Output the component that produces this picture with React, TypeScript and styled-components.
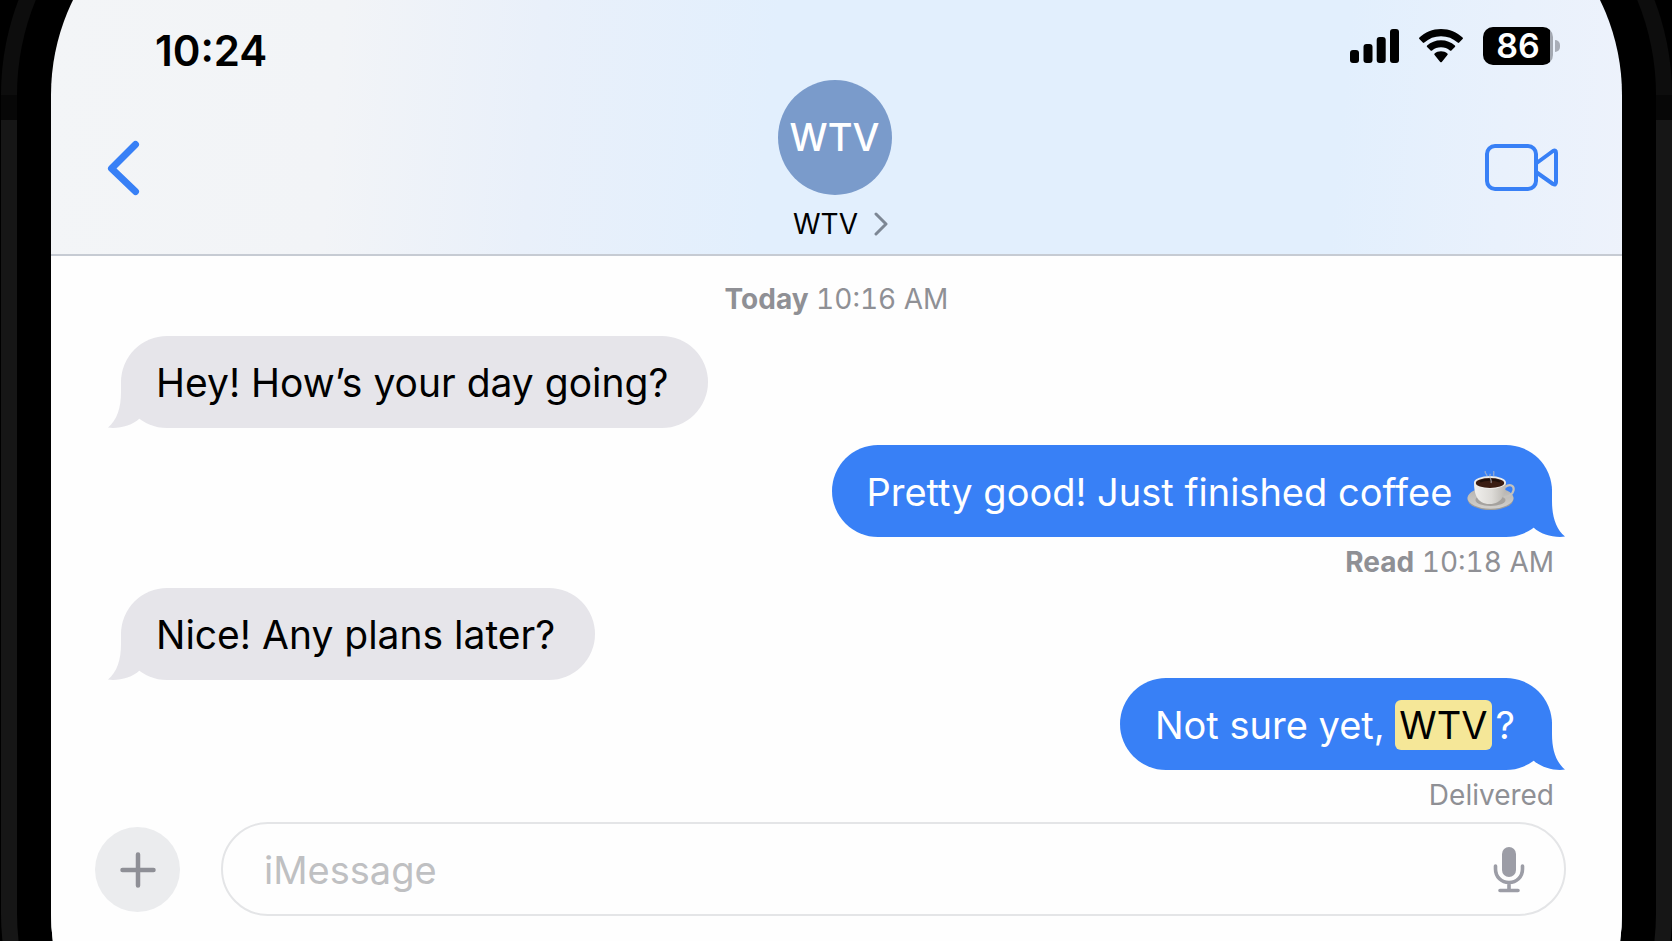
import React from "react";
import styled, { createGlobalStyle } from "styled-components";

const blue = "#3880f6";
const grey = "#e6e5ea";
const muted = "#8f9095";

const GlobalStyle = createGlobalStyle`
  * { box-sizing: border-box; }
  body {
    margin: 0;
    background: #000;
    font-family: Inter, "Liberation Sans", sans-serif;
    color: #000;
  }
  button, input { font: inherit; color: inherit; }
  p { margin: 0; }
`;

/* The phone runs past the top and bottom of the window, so only the start of its corners shows. */
const Stage = styled.div`
  min-height: 100vh;
  overflow: hidden;
  display: flex;
  flex-direction: column;
  background: #000;
`;

const Rim = styled.div`
  flex: 1;
  display: flex;
  margin: -171px 0 -238px 1px;
  padding: 16px;
  border-radius: 266px;
  background: linear-gradient(#0d0d0d 266px, #070707 266px, #070707 291px, #161616 291px);
`;

const Bezel = styled.div`
  flex: 1;
  display: flex;
  min-width: 0;
  padding: 34px;
  border-radius: 250px;
  background: #000;
`;

const Screen = styled.main`
  flex: 1;
  min-width: 0;
  display: flex;
  flex-direction: column;
  padding: 121px 0 188px;
  border-radius: 216px;
  overflow: hidden;
  background: linear-gradient(95deg, #f3f5f7 0%, #f2f4f7 18%, #e9f0fa 30%, #e2effd 44%, #e2effd 78%, #e9f1fc 88%, #f0f3fb 100%);
`;

const Header = styled.header`
  border-bottom: 2px solid #c6cbd3;
`;

const StatusBar = styled.div`
  display: flex;
  justify-content: space-between;
  height: 80px;
  padding: 27px 62px 0 104px;
`;

const Clock = styled.time`
  font-size: 42px;
  line-height: 48px;
  font-weight: 600;
`;

const StatusIcons = styled.div`
  display: flex;
  align-items: flex-start;
  gap: 20px;
`;

const BatteryBox = styled.div`
  display: flex;
  align-items: center;
  gap: 2px;
  height: 38px;
`;

const BatteryLevel = styled.div`
  width: 70px;
  height: 38px;
  border-radius: 10px;
  background: linear-gradient(90deg, #000 67px, #a3a8b1 67px);
  color: #fff;
  font-size: 34px;
  line-height: 38px;
  font-weight: 600;
  text-align: center;
`;

const BatteryCap = styled.div`
  width: 5px;
  height: 12px;
  border-radius: 0 5px 5px 0;
  background: #a9aeb8;
`;

const NavBar = styled.nav`
  display: grid;
  grid-template-columns: 1fr auto 1fr;
  height: 174px;
  padding: 0 64px 0 54px;
`;

const IconButton = styled.button<{ $end?: boolean }>`
  display: flex;
  align-self: start;
  justify-self: ${(p) => (p.$end ? "end" : "start")};
  margin-top: 59px;
  padding: 0;
  border: 0;
  background: none;
  color: ${blue};
`;

const Contact = styled.button`
  display: flex;
  flex-direction: column;
  align-items: center;
  gap: 11px;
  margin-left: 6px;
  padding: 0;
  border: 0;
  background: none;
`;

const Avatar = styled.span`
  display: grid;
  place-items: center;
  width: 114px;
  height: 115px;
  padding-bottom: 2px;
  border-radius: 50%;
  background: #7a9bcb;
  color: #fff;
  font-size: 38px;
  font-weight: 500;
`;

const ContactName = styled.span`
  display: flex;
  align-items: center;
  gap: 16px;
  padding-left: 12px;
  font-size: 28px;
  line-height: 36px;
`;

const Thread = styled.section`
  display: flex;
  flex-direction: column;
  padding: 0 70px;
  background: #fefefe;
`;

const Stamp = styled.p`
  padding: 23px 0 17px;
  color: ${muted};
  font-size: 28px;
  line-height: 40px;
  font-variant-numeric: tabular-nums;
  text-align: center;
`;

const Receipt = styled(Stamp)`
  margin-right: -2px;
  padding: 5px 0 6px;
  text-align: right;
`;

const Bubble = styled.p<{ $mine?: boolean; $gap?: number }>`
  position: relative;
  align-self: ${(p) => (p.$mine ? "flex-end" : "flex-start")};
  display: flex;
  align-items: center;
  height: 92px;
  margin-top: ${(p) => p.$gap ?? 0}px;
  padding: ${(p) => (p.$mine ? "2px 37px 0 35px" : "2px 40px 0 35px")};
  border-radius: 46px;
  background: ${(p) => (p.$mine ? blue : grey)};
  color: ${(p) => (p.$mine ? "#fff" : "#000")};
  font-size: ${(p) => (p.$mine ? 38 : 39)}px;
  line-height: 50px;
  white-space: pre;
`;

const TailShape = styled.svg<{ $mine?: boolean }>`
  position: absolute;
  bottom: 0;
  ${(p) => (p.$mine ? "right: -16px; transform: scaleX(-1);" : "left: -16px;")}
  fill: ${(p) => (p.$mine ? blue : grey)};
`;

const Emoji = styled.svg`
  margin-left: 4px;
`;

const Mark = styled.mark`
  margin-right: 4px;
  padding: 0 4px;
  border-radius: 6px;
  background: #f5e798;
  color: #000;
`;

const Composer = styled.form`
  flex: 1;
  display: flex;
  align-items: flex-start;
  gap: 41px;
  padding: 1px 56px 25px 44px;
  background: #fefefe;
`;

const AddButton = styled.button`
  display: grid;
  place-items: center;
  flex: none;
  width: 85px;
  height: 85px;
  margin-top: 5px;
  padding: 0;
  border: 0;
  border-radius: 50%;
  background: #ebecee;
  color: #8e8f96;
`;

const Field = styled.div`
  flex: 1;
  display: flex;
  align-items: center;
  min-width: 0;
  height: 94px;
  padding: 2px 39px 0 41px;
  border: 2px solid #e4e5e7;
  border-radius: 47px;
`;

const TextBox = styled.input`
  flex: 1;
  min-width: 0;
  padding: 0;
  border: 0;
  outline: 0;
  background: none;
  font-size: 38px;
  line-height: 52px;
  &::placeholder { color: #bfc0c2; opacity: 1; }
`;

const MicButton = styled.button`
  display: flex;
  padding: 0;
  border: 0;
  background: none;
  color: #9c9da6;
`;

function Tail({ mine }: { mine?: boolean }) {
  return (
    <TailShape $mine={mine} width="40" height="48" viewBox="0 0 40 48" aria-hidden="true">
      <path d="M16 0V12C16 28 12 40 3 47.6C14 49 27 45.5 34.5 38.4V0Z" />
    </TailShape>
  );
}

function Signal() {
  return (
    <svg width="49" height="36" viewBox="0 0 49 36" aria-hidden="true">
      <rect x="0" y="23" width="9" height="13" rx="3" />
      <rect x="13.5" y="17" width="9" height="19" rx="3" />
      <rect x="26.7" y="10" width="9" height="26" rx="3" />
      <rect x="40" y="2" width="9" height="34" rx="3" />
    </svg>
  );
}

function Wifi() {
  return (
    <svg width="44" height="36" viewBox="0 0 44 36" aria-hidden="true">
      <path d="M22 2C30.4 2 38 5.2 43.6 10.6Q44.3 11.4 43.6 12.1L40.2 15.6Q39.5 16.3 38.7 15.6C34.2 11.4 28.4 9.2 22 9.2S9.8 11.4 5.3 15.6Q4.5 16.3 3.8 15.6L.4 12.1Q-.3 11.4 .4 10.6C6 5.2 13.6 2 22 2Z" />
      <path d="M22 13.2C27.4 13.2 32.2 15.2 35.9 18.5Q36.7 19.2 35.9 20L32.4 23.5Q31.7 24.2 30.9 23.5C28.4 21.4 25.4 20.3 22 20.3S15.6 21.4 13.1 23.5Q12.3 24.2 11.6 23.5L8.1 20Q7.3 19.2 8.1 18.5C11.8 15.2 16.6 13.2 22 13.2Z" />
      <path d="M22 24.2C24.5 24.2 26.7 25 28.4 26.4Q29.2 27.2 28.4 28L22.8 34.9Q22 35.7 21.2 34.9L15.6 28Q14.8 27.2 15.6 26.4C17.3 25 19.5 24.2 22 24.2Z" />
    </svg>
  );
}

function Coffee() {
  return (
    <Emoji width="48" height="42" viewBox="0 0 48 42" role="img" aria-label="hot beverage">
      <defs>
        <linearGradient id="cup" x1="0" x2="1">
          <stop offset="0" stopColor="#f1f0ed" />
          <stop offset=".55" stopColor="#dddbd7" />
          <stop offset="1" stopColor="#b9b6b1" />
        </linearGradient>
        <linearGradient id="saucer" x1="0" y1="0" x2="0" y2="1">
          <stop offset="0" stopColor="#b3b1ae" />
          <stop offset="1" stopColor="#d2d0cc" />
        </linearGradient>
      </defs>
      <ellipse cx="23.5" cy="28" rx="23" ry="11" fill="#a09e9b" />
      <ellipse cx="23.5" cy="27" rx="23" ry="10.7" fill="url(#saucer)" />
      <ellipse cx="23.5" cy="29" rx="15" ry="6" fill="#a5a29e" />
      <path d="M38 16C43 12.5 47.5 14.5 46.5 19.5C45.5 24 40.5 26.3 36.5 26" fill="none" stroke="#c4c2be" strokeWidth="2.2" />
      <path d="M7 11C7 23 10 33 22.5 33S39 23 39 11Z" fill="url(#cup)" />
      <ellipse cx="23" cy="11.5" rx="16" ry="6.5" fill="#efedea" />
      <ellipse cx="23" cy="12" rx="14.2" ry="5" fill="#3a1d12" />
      <path d="M13 10.5C18 8 28 8 33 10.5" fill="none" stroke="#1e0f0a" strokeWidth="2" />
      <path d="M20 5C20 3 17 2 18.5 0M24 12C25.5 9 21 6 23.5 3M27 5C26 3 27.5 2 26.5 0" fill="none" stroke="#b4b8c2" strokeOpacity=".7" strokeWidth="1.3" />
    </Emoji>
  );
}

export default function App() {
  return (
    <Stage>
      <GlobalStyle />
      <Rim>
        <Bezel>
          <Screen>
            <Header>
              <StatusBar>
                <Clock>10:24</Clock>
                <StatusIcons>
                  <Signal />
                  <Wifi />
                  <BatteryBox>
                    <BatteryLevel>86</BatteryLevel>
                    <BatteryCap />
                  </BatteryBox>
                </StatusIcons>
              </StatusBar>
              <NavBar>
                <IconButton type="button" aria-label="Back">
                  <svg width="38" height="58" viewBox="0 0 38 58" fill="none" stroke="currentColor" strokeWidth="7" strokeLinecap="round" strokeLinejoin="round" aria-hidden="true">
                    <path d="M30.5 5.5L6.5 29.5L30.5 52.5" />
                  </svg>
                </IconButton>
                <Contact type="button">
                  <Avatar aria-hidden="true">WTV</Avatar>
                  <ContactName>
                    WTV
                    <svg width="14" height="24" viewBox="0 0 14 24" fill="none" stroke="#7d8794" strokeWidth="3" strokeLinecap="round" strokeLinejoin="round" aria-hidden="true">
                      <path d="M2 2L12 12L2 22" />
                    </svg>
                  </ContactName>
                </Contact>
                <IconButton type="button" $end aria-label="Video call">
                  <svg width="74" height="58" viewBox="0 0 74 58" fill="none" stroke="currentColor" strokeWidth="4" strokeLinejoin="round" aria-hidden="true">
                    <rect x="3" y="7" width="49" height="43" rx="8" />
                    <path d="M52 24.5L69 12Q72 10.5 72 14V43Q72 46.5 69 45L52 33" />
                  </svg>
                </IconButton>
              </NavBar>
            </Header>

            <Thread>
              <Stamp>
                <b>Today</b> 10:16 AM
              </Stamp>
              <Bubble>
                <Tail />
                Hey! How’s your day going?
              </Bubble>
              <Bubble $mine $gap={17}>
                <Tail mine />
                {"Pretty good! Just finished coffee "}
                <Coffee />
              </Bubble>
              <Receipt>
                <b>Read</b> 10:18 AM
              </Receipt>
              <Bubble>
                <Tail />
                Nice! Any plans later?
              </Bubble>
              <Bubble $mine $gap={-2}>
                <Tail mine />
                {"Not sure yet, "}
                <Mark>WTV</Mark>?
              </Bubble>
              <Receipt>Delivered</Receipt>
            </Thread>

            <Composer onSubmit={(e) => e.preventDefault()}>
              <AddButton type="button" aria-label="Add attachment">
                <svg width="36" height="36" viewBox="0 0 36 36" stroke="currentColor" strokeWidth="4.5" strokeLinecap="round" aria-hidden="true">
                  <path d="M18 2.5V33.5M2.5 18H33.5" />
                </svg>
              </AddButton>
              <Field>
                <TextBox type="text" aria-label="Message" placeholder="iMessage" />
                <MicButton type="button" aria-label="Dictate">
                  <svg width="32" height="46" viewBox="0 0 32 46" fill="none" stroke="currentColor" strokeWidth="3.6" strokeLinecap="round" aria-hidden="true">
                    <rect x="9" y="0" width="14" height="30" rx="7" fill="currentColor" stroke="none" />
                    <path d="M2.5 19V22C2.5 30 8.5 35.5 16 35.5S29.5 30 29.5 22V19M16 36V43M7 43.5H25" />
                  </svg>
                </MicButton>
              </Field>
            </Composer>
          </Screen>
        </Bezel>
      </Rim>
    </Stage>
  );
}
